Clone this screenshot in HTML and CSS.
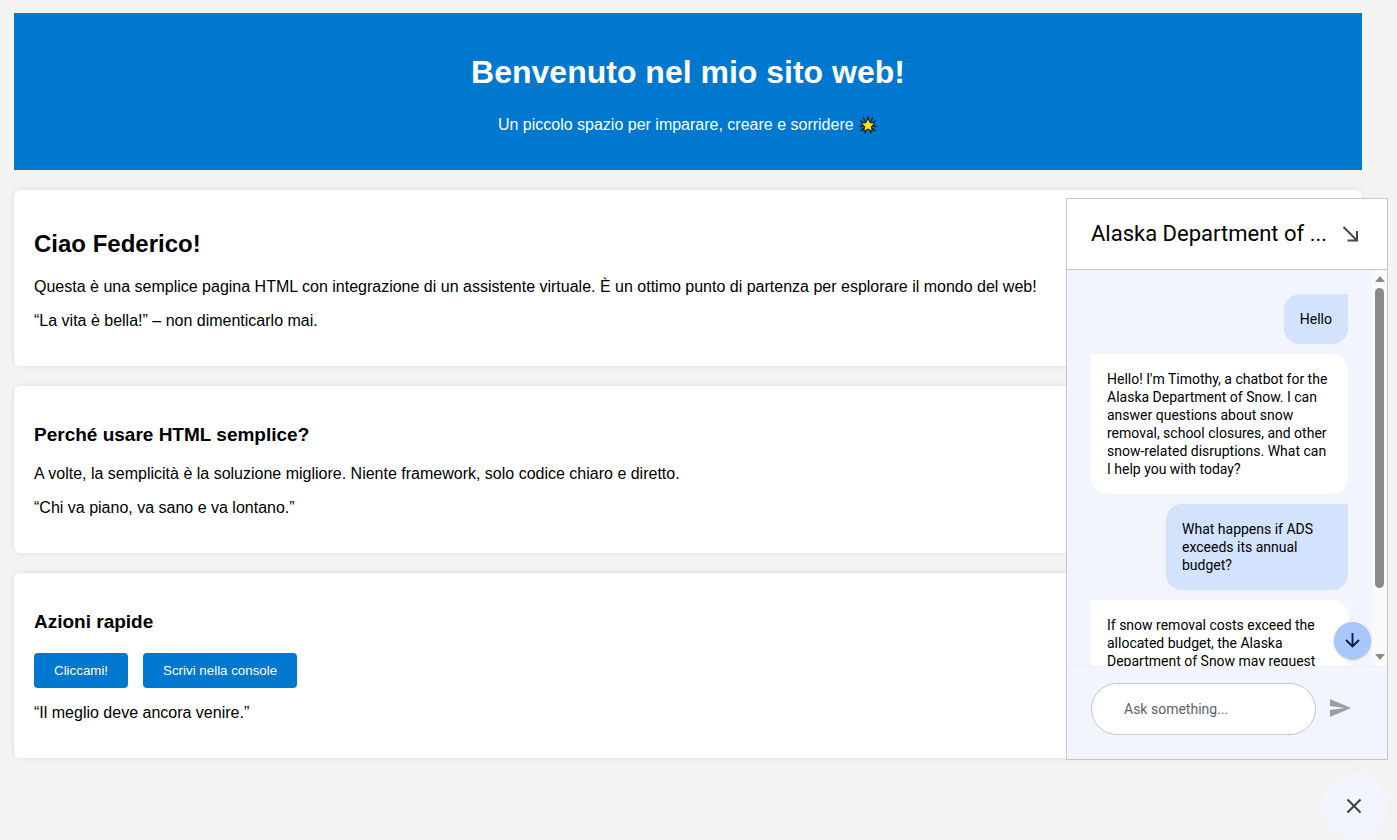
FILE: index.html
```html
<!DOCTYPE html>
<html lang="it">
<head>
<meta charset="utf-8">
<meta name="viewport" content="width=device-width, initial-scale=1">
<title>Benvenuto nel mio sito web!</title>
<link rel="stylesheet" href="styles.css">
</head>
<body>
<header class="hero">
  <h1 class="hero-title">Benvenuto nel mio sito web!</h1>
  <p class="hero-text">Un piccolo spazio per imparare, creare e sorridere
    <svg class="star" viewBox="0 0 18 18" role="img" aria-label="stella">
      <g fill="none" stroke="#10161c" stroke-width="1.300" stroke-linecap="round">
        <path d="M9 .8v3M4.500 2l1.500 3M13.500 2 12 5M1.500 5l2.500 1M16.500 5 14 6M1 10.500l3-.5M17 10.500l-3-.5M2 14.500l2.500-2M16 14.500l-2.500-2M6 17l1-2.500M12 17l-1-2.500"/>
      </g>
      <path d="M9 2.200l2 4.500 5 .5-3.800 3.300 1.200 5L9 13l-4.400 2.500 1.200-5L2 7.200l5-.5z" fill="#ffe400" stroke="#10161c" stroke-width="1"/>
    </svg>
  </p>
</header>
<main class="content">
  <section class="card">
    <h2 class="card-title">Ciao Federico!</h2>
    <p class="text">Questa è una semplice pagina HTML con integrazione di un assistente virtuale. È un ottimo punto di partenza per esplorare il mondo del web!</p>
    <p class="text">“La vita è bella!” – non dimenticarlo mai.</p>
  </section>
  <section class="card">
    <h3 class="card-subtitle">Perché usare HTML semplice?</h3>
    <p class="text">A volte, la semplicità è la soluzione migliore. Niente framework, solo codice chiaro e diretto.</p>
    <p class="text">“Chi va piano, va sano e va lontano.”</p>
  </section>
  <section class="card">
    <h3 class="card-subtitle">Azioni rapide</h3>
    <div class="actions">
      <button class="action" type="button">Cliccami!</button>
      <button class="action" type="button">Scrivi nella console</button>
    </div>
    <p class="text">“Il meglio deve ancora venire.”</p>
  </section>
</main>

<aside class="chat" lang="en">
  <div class="chat-header">
    <h2 class="chat-title">Alaska Department of ...</h2>
    <button class="icon-button" type="button" aria-label="Minimize">
      <svg width="24" height="24" viewBox="0 0 24 24"><path d="M4.500 5 17.500 18M18 9v9.500H8.500" fill="none" stroke="#444746" stroke-width="2"/></svg>
    </button>
  </div>
  <div class="chat-body">
    <div class="messages">
      <p class="message user">Hello</p>
      <p class="message bot">Hello! I'm Timothy, a chatbot for the<br>Alaska Department of Snow. I can<br>answer questions about snow<br>removal, school closures, and other<br>snow-related disruptions. What can<br>I help you with today?</p>
      <p class="message user wide">What happens if ADS<br>exceeds its annual<br>budget?</p>
      <p class="message bot">If snow removal costs exceed the<br>allocated budget, the Alaska<br>Department of Snow may request</p>
    </div>
    <div class="scrollbar">
      <svg width="10" height="6" viewBox="0 0 10 6"><path d="M0 6 5 0l5 6z" fill="#8b8b8b"/></svg>
      <div class="thumb"></div>
      <svg width="10" height="6" viewBox="0 0 10 6"><path d="M0 0h10L5 6z" fill="#8b8b8b"/></svg>
    </div>
    <button class="jump" type="button" aria-label="Scroll to bottom">
      <svg width="24" height="24" viewBox="0 0 24 24"><path d="M11.500 4v13.500M5 11l6.500 6.500L18 11" fill="none" stroke="#041e49" stroke-width="1.900"/></svg>
    </button>
  </div>
  <form class="chat-form">
    <input class="chat-input" type="text" placeholder="Ask something..." aria-label="Ask something">
    <button class="icon-button" type="button" aria-label="Send">
      <svg width="24" height="24" viewBox="0 0 24 24"><path d="M2 20 23 11 2 2v7l15 2-15 2z" fill="#9a9da5"/></svg>
    </button>
  </form>
</aside>
<button class="close" type="button" aria-label="Close chat">
  <svg width="24" height="24" viewBox="0 0 24 24"><path d="M5.500 5.500l13 13M18.500 5.500l-13 13" fill="none" stroke="#3c4043" stroke-width="2"/></svg>
</button>
</body>
</html>
```
FILE: styles.css
```css
* {
  box-sizing: border-box;
}

body {
  margin: 0;
  padding: 13px 35px 13px 14px;
  background: #f3f3f3;
  color: #000;
  font: 16px/18px "Liberation Sans", Arial, sans-serif;
}

button {
  border: 0;
  cursor: pointer;
}

svg {
  display: block;
}

.hero {
  padding: 41px 20px 35px;
  background: #0078d0;
  color: #fff;
  text-align: center;
}

.hero-title {
  margin: 0 0 24px;
  font-size: 32px;
  line-height: 37px;
}

.hero-text {
  margin: 0;
  line-height: 20px;
}

.star {
  display: inline-block;
  width: 20px;
  height: 18px;
  vertical-align: -4px;
}

.card {
  margin-top: 20px;
  padding: 20px;
  border-radius: 6px;
  background: #fff;
  box-shadow: 0 0 5px rgba(0, 0, 0, 0.1);
}

.card-title {
  margin: 20px 0;
  font-size: 24px;
  line-height: 28px;
}

.card-subtitle {
  margin: 18px 0 19px;
  font-size: 19px;
  line-height: 22px;
}

.text {
  margin: 16px 0;
}

.actions {
  display: flex;
  gap: 15px;
  margin-top: 20px;
}

.action {
  padding: 10px 20px;
  border-radius: 4px;
  background: #0078d0;
  color: #fff;
  font-family: "Liberation Sans", Arial, sans-serif;
  line-height: 15px;
}

.chat {
  position: fixed;
  right: 9px;
  bottom: 80px;
  display: flex;
  flex-direction: column;
  width: 322px;
  height: 562px;
  border: 1px solid #c4c7c9;
  background: #f2f5fd;
  font: 14px/18px Roboto, sans-serif;
}

.chat-header {
  display: flex;
  align-items: center;
  justify-content: space-between;
  padding: 20px 24px;
  border-bottom: 1px solid #c4c7c9;
  background: #fff;
}

.chat-title {
  margin: 0;
  font-size: 22px;
  font-weight: 400;
  line-height: 30px;
  white-space: nowrap;
}

.icon-button {
  padding: 0;
  background: none;
}

.chat-body {
  position: relative;
  display: flex;
  flex: 1;
  min-height: 0;
  overflow: hidden;
}

.messages {
  display: flex;
  flex: 1;
  flex-direction: column;
  gap: 10px;
  padding: 24px;
  overflow: hidden;
}

.message {
  flex: none;
  margin: 0;
  padding: 16px;
  white-space: nowrap;
}

.user {
  align-self: flex-end;
  border-radius: 16px 0 16px 16px;
  background: #d3e3fd;
}

.wide {
  width: 182px;
}

.bot {
  align-self: stretch;
  border-radius: 0 16px 16px 16px;
  background: #fff;
}

.scrollbar {
  display: flex;
  flex-direction: column;
  align-items: center;
  width: 15px;
  padding: 6px 0;
  background: #fafafa;
}

.thumb {
  width: 9px;
  height: 300px;
  margin: 6px 0 auto;
  border-radius: 5px;
  background: #8b8b8b;
}

.jump {
  position: absolute;
  right: 16px;
  bottom: 7px;
  display: grid;
  place-items: center;
  width: 37px;
  height: 37px;
  padding: 0;
  border-radius: 50%;
  background: #a8c7fa;
  box-shadow: 0 1px 2px rgba(0, 0, 0, 0.25);
}

.chat-form {
  display: flex;
  align-items: center;
  gap: 12px;
  padding: 16px 35px 24px 24px;
  border-top: 1px solid #eceff6;
}

.chat-input {
  flex: 1;
  min-width: 0;
  height: 52px;
  padding: 0 32px;
  border: 1px solid #c4c7c9;
  border-radius: 26px;
  background: #fff;
  font: inherit;
}

.chat-input::placeholder {
  color: #5f6368;
  opacity: 1;
}

.close {
  position: fixed;
  right: 11px;
  bottom: 2px;
  display: grid;
  place-items: center;
  width: 64px;
  height: 64px;
  padding: 0;
  border-radius: 50%;
  background: #f2f5fd;
}
```
